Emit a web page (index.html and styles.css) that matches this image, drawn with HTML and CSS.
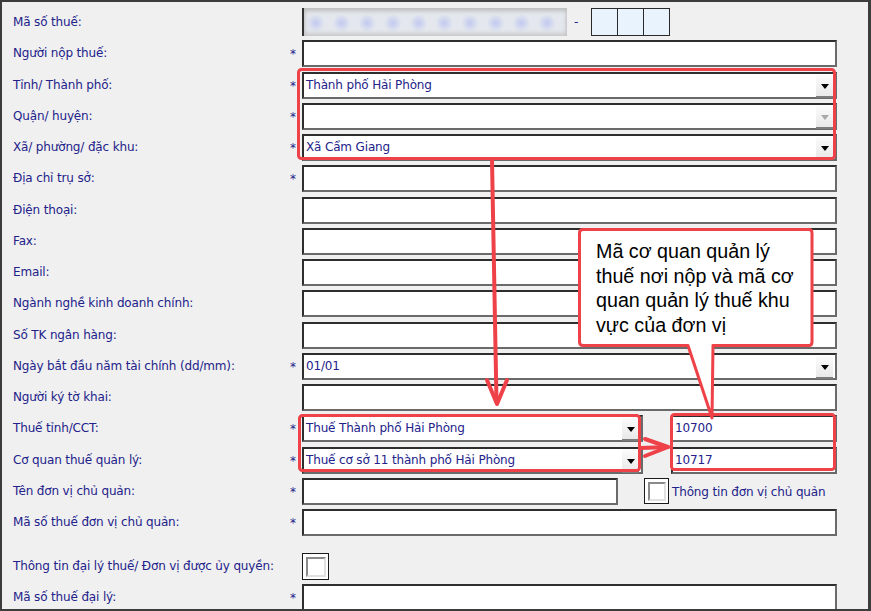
FILE: index.html
```html
<!DOCTYPE html>
<html lang="vi">
  <head>
    <meta charset="UTF-8" />
    <title>Thông tin người nộp thuế</title>
    <link rel="stylesheet" href="styles.css">
  </head>
  <body>
    <div class="frame">
      <div class="form">
        <!-- mã số thuế -->
        <label class="lbl">Mã số thuế:</label>
        <span class="req"></span>
        <div class="mst">
          <div class="mst-main"></div>
          <span class="mst-dash">-</span>
          <div class="mst-branch"><span></span><span></span><span></span></div>
        </div>

        <label class="lbl">Người nộp thuế:</label>
        <span class="req">*</span>
        <div class="field"></div>

        <label class="lbl">Tỉnh/ Thành phố:</label>
        <span class="req">*</span>
        <div class="field combo">Thành phố Hải Phòng<i class="drop"></i></div>

        <label class="lbl">Quận/ huyện:</label>
        <span class="req">*</span>
        <div class="field combo"><i class="drop drop-off"></i></div>

        <label class="lbl">Xã/ phường/ đặc khu:</label>
        <span class="req">*</span>
        <div class="field combo">Xã Cẩm Giang<i class="drop"></i></div>

        <label class="lbl">Địa chỉ trụ sở:</label>
        <span class="req">*</span>
        <div class="field"></div>

        <label class="lbl">Điện thoại:</label>
        <span class="req"></span>
        <div class="field"></div>

        <label class="lbl">Fax:</label>
        <span class="req"></span>
        <div class="field"></div>

        <label class="lbl">Email:</label>
        <span class="req"></span>
        <div class="field"></div>

        <label class="lbl">Ngành nghề kinh doanh chính:</label>
        <span class="req"></span>
        <div class="field"></div>

        <label class="lbl">Số TK ngân hàng:</label>
        <span class="req"></span>
        <div class="field"></div>

        <label class="lbl">Ngày bắt đầu năm tài chính (dd/mm):</label>
        <span class="req">*</span>
        <div class="field combo">01/01<i class="drop"></i></div>

        <label class="lbl">Người ký tờ khai:</label>
        <span class="req"></span>
        <div class="field"></div>

        <label class="lbl">Thuế tỉnh/CCT:</label>
        <span class="req">*</span>
        <div class="pair">
          <div class="field combo combo-short">Thuế Thành phố Hải Phòng<i class="drop"></i></div>
          <div class="field code">10700</div>
        </div>

        <label class="lbl">Cơ quan thuế quản lý:</label>
        <span class="req">*</span>
        <div class="pair">
          <div class="field combo combo-short">Thuế cơ sở 11 thành phố Hải Phòng<i class="drop"></i></div>
          <div class="field code">10717</div>
        </div>

        <label class="lbl">Tên đơn vị chủ quản:</label>
        <span class="req">*</span>
        <div class="pair">
          <div class="field field-short"></div>
          <span class="check"></span>
          <span class="check-text">Thông tin đơn vị chủ quản</span>
        </div>

        <label class="lbl">Mã số thuế đơn vị chủ quản:</label>
        <span class="req">*</span>
        <div class="field"></div>

        <div class="spacer"></div>

        <label class="lbl">Thông tin đại lý thuế/ Đơn vị được ủy quyền:</label>
        <span class="req"></span>
        <div class="pair"><span class="check check-big"></span></div>

        <label class="lbl">Mã số thuế đại lý:</label>
        <span class="req">*</span>
        <div class="field"></div>
      </div>

      <!-- red markup drawn on top of the form -->
      <svg class="marks" width="871" height="611" viewBox="0 0 871 611">
        <g fill="none" stroke="#ee4148" stroke-width="3" stroke-linejoin="round" stroke-linecap="round">
          <rect x="298.5" y="69.5" width="536" height="89" rx="3" />
          <rect x="299.5" y="415.5" width="340" height="55" rx="3" />
          <rect x="671.5" y="414.5" width="163" height="55" rx="3" />
          <path d="M492 160 L496.5 402" stroke-width="4" />
          <path d="M487 380 L497 404 L507 380" stroke-width="4" />
          <path d="M641 448 L668 447" stroke-width="4" />
          <path d="M645 439 L668 447 L645 456" stroke-width="4" />
          <path d="M583 229.5 H809 Q812 229.5 812 233 V342 Q812 345.5 809 345.5 H713 L712 418 L688 345.5 H583 Q579.5 345.5 579.5 342 V233 Q579.5 229.5 583 229.5 Z" fill="#fff" />
        </g>
      </svg>
      <p class="callout">Mã cơ quan quản lý<br>thuế nơi nộp và mã cơ<br>quan quản lý thuế khu<br>vực của đơn vị</p>
    </div>
  </body>
</html>
```

FILE: styles.css
```css
body {
  margin: 0;
  background-color: #f0f0f0;
}

.frame {
  position: relative;
  width: 871px;
  height: 611px;
  box-sizing: border-box;
  border: 2px solid #3c3c3c;
  border-right-width: 3px;
  background-color: #f0f0f0;
  overflow: hidden;
  font-family: "DejaVu Sans", Tahoma, sans-serif;
  font-size: 12px;
  letter-spacing: -0.15px;
  color: #22228a;
}

.form {
  display: grid;
  grid-template-columns: 277px 12px 535px;
  row-gap: 4.27px;
  padding: 6px 0 0 11px;
  align-items: center;
}

.lbl {
  height: 27px;
  line-height: 27px;
  white-space: nowrap;
}

.req {
  height: 27px;
  line-height: 29px;
  font-size: 12px;
}

.spacer {
  grid-column: 1 / -1;
  height: 8px;
}

.field {
  position: relative;
  height: 27px;
  box-sizing: border-box;
  border: 2px solid;
  border-color: #2e2e2e #6a6a6a #6a6a6a #2e2e2e;
  background-color: #fff;
  padding-left: 2px;
  line-height: 23px;
  white-space: nowrap;
}

.combo .drop {
  position: absolute;
  top: 1px;
  right: 2px;
  width: 17px;
  height: 21px;
  background: linear-gradient(#fbfbfb, #e9e9e9);
  border-bottom: 2px solid #7c7c7c;
}

.combo .drop:after {
  content: "";
  position: absolute;
  left: 5px;
  top: 9px;
  border-left: 4px solid transparent;
  border-right: 4px solid transparent;
  border-top: 5px solid #000;
}

.combo .drop-off:after {
  border-top-color: #a8a8a8;
}

.pair {
  display: flex;
  align-items: center;
  height: 27px;
}

.combo-short {
  width: 341px;
}

.code {
  width: 166px;
  margin-left: 28px;
}

.field-short {
  width: 316px;
}

.check {
  position: relative;
  width: 25px;
  height: 26px;
  box-sizing: border-box;
  margin-left: 26px;
  border: 1px solid #1a1a1a;
  background-color: #fff;
}

.check:after {
  content: "";
  position: absolute;
  left: 3px;
  top: 3px;
  width: 14px;
  height: 15px;
  border: 2px solid;
  border-color: #8a8a8a #e0e0e0 #e0e0e0 #8a8a8a;
}

.check-big {
  margin-left: 0;
  width: 27px;
  height: 27px;
}

.check-big:after {
  width: 16px;
  height: 16px;
}

.check-text {
  margin-left: 3px;
  padding-top: 2px;
}

/* blurred tax code and the three branch boxes */
.mst {
  display: flex;
  align-items: center;
  height: 28px;
}

.mst-main {
  width: 265px;
  height: 28px;
  box-sizing: border-box;
  border-left: 2px solid #333;
  background-color: #e4e8ee;
  background-image: radial-gradient(circle, rgba(170, 180, 240, 0.6) 0, rgba(210, 218, 240, 0) 9px);
  background-size: 25.7px 100%;
  background-position: -1px 1px;
  box-shadow: inset 0 3px 4px #bcbcbc, inset 0 -3px 4px #cacaca;
}

.mst-dash {
  margin-left: 7px;
  width: 17px;
}

.mst-branch {
  display: flex;
  border: 1px solid #2a2a2a;
  height: 28px;
  box-sizing: border-box;
}

.mst-branch span {
  width: 25px;
  background-color: #e8f3fe;
  border-left: 1px solid #2a2a2a;
}

.mst-branch span:first-child {
  border-left: 0;
}

.marks {
  position: absolute;
  left: -2px;
  top: -2px;
}

.callout {
  position: absolute;
  left: 594px;
  top: 237px;
  margin: 0;
  font-family: "Liberation Sans", Arial, sans-serif;
  font-size: 19.7px;
  line-height: 24.5px;
  letter-spacing: 0;
  color: #000;
}
```
